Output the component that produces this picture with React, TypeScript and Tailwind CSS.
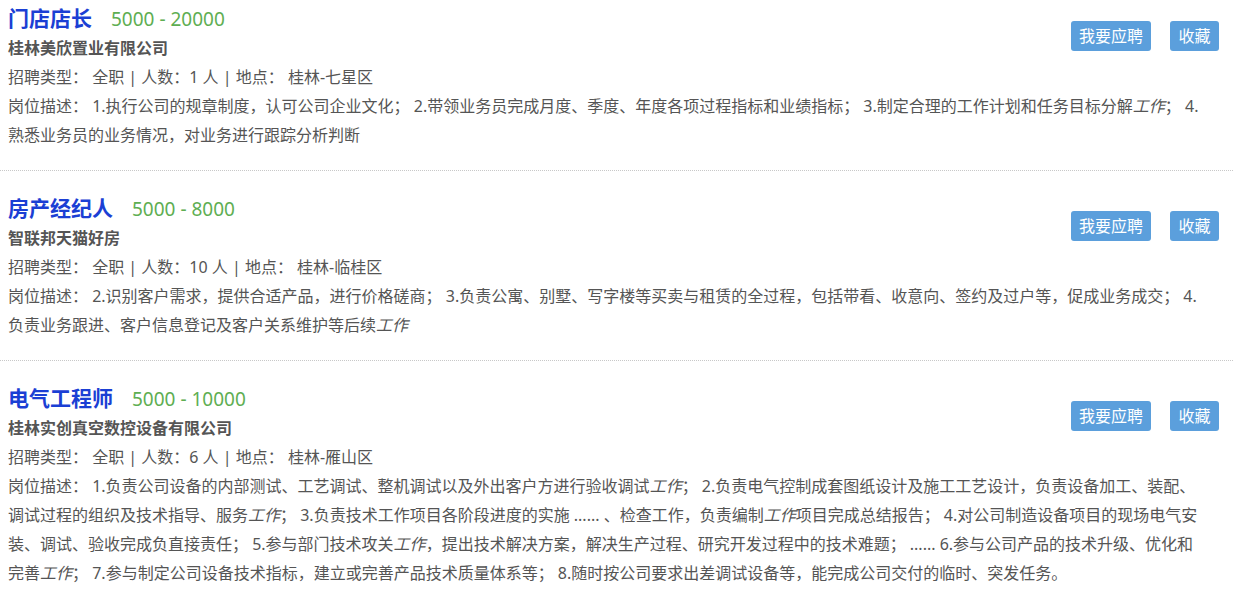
import React from 'react';

type Job = {
  title: string;
  salary: string;
  company: string;
  count: number;
  place: string;
  desc: React.ReactNode;
};

const W = () => <em className="italic">工作</em>;

const jobs: Job[] = [
  {
    title: '门店店长',
    salary: '5000 - 20000',
    company: '桂林美欣置业有限公司',
    count: 1,
    place: '桂林-七星区',
    desc: (
      <>
        1.执行公司的规章制度，认可公司企业文化； 2.带领业务员完成月度、季度、年度各项过程指标和业绩指标； 3.制定合理的工作计划和任务目标分解<W />； 4.熟悉业务员的业务情况，对业务进行跟踪分析判断
      </>
    ),
  },
  {
    title: '房产经纪人',
    salary: '5000 - 8000',
    company: '智联邦天猫好房',
    count: 10,
    place: '桂林-临桂区',
    desc: (
      <>
        2.识别客户需求，提供合适产品，进行价格磋商； 3.负责公寓、别墅、写字楼等买卖与租赁的全过程，包括带看、收意向、签约及过户等，促成业务成交； 4.负责业务跟进、客户信息登记及客户关系维护等后续<W />
      </>
    ),
  },
  {
    title: '电气工程师',
    salary: '5000 - 10000',
    company: '桂林实创真空数控设备有限公司',
    count: 6,
    place: '桂林-雁山区',
    desc: (
      <>
        1.负责公司设备的内部测试、工艺调试、整机调试以及外出客户方进行验收调试<W />； 2.负责电气控制成套图纸设计及施工工艺设计，负责设备加工、装配、调试过程的组织及技术指导、服务<W />； 3.负责技术工作项目各阶段进度的实施 ...... 、检查工作，负责编制<W />项目完成总结报告； 4.对公司制造设备项目的现场电气安装、调试、验收完成负直接责任； 5.参与部门技术攻关<W />，提出技术解决方案，解决生产过程、研究开发过程中的技术难题； ...... 6.参与公司产品的技术升级、优化和完善<W />； 7.参与制定公司设备技术指标，建立或完善产品技术质量体系等； 8.随时按公司要求出差调试设备等，能完成公司交付的临时、突发任务。
      </>
    ),
  },
];

function JobItem({ job, first }: { job: Job; first?: boolean }) {
  return (
    <div
      className={
        'border-b border-dotted border-[#c8c8c8] pl-[8px] pr-[14px] pb-[20px] ' +
        (first ? 'pt-[3px]' : 'pt-[22px]')
      }
    >
      <div className="flex justify-between">
        <div>
          <div className="flex items-baseline leading-[30px]">
            <span className="text-[21px] font-bold text-[#1b3fd4]">{job.title}</span>
            <span className="ml-[19px] text-[19px] text-[#5eae52]">{job.salary}</span>
          </div>
          <div className="text-[16px] font-bold leading-[29px] text-[#555]">{job.company}</div>
        </div>
        <div className="mt-[18px] flex h-[30px] gap-[19px]">
          <button className="h-[30px] w-[80px] rounded-[3px] bg-[#5b9fdc] text-[16px] text-white">我要应聘</button>
          <button className="h-[30px] w-[49px] rounded-[3px] bg-[#5b9fdc] text-[16px] text-white">收藏</button>
        </div>
      </div>
      <div className="pr-[11px] text-[16px] leading-[29px] text-[#555]">
        <div>招聘类型： 全职 | 人数：{job.count} 人 | 地点： {job.place}</div>
        <div>岗位描述： {job.desc}</div>
      </div>
    </div>
  );
}

export default function App() {
  return (
    <div
      className="h-[593px] w-[1240px] overflow-hidden bg-white"
      style={{ fontFamily: '"Noto Sans", "Noto Sans CJK SC", sans-serif' }}
    >
      <div className="w-[1233px]">
        {jobs.map((j, i) => (
          <JobItem key={j.title} job={j} first={i === 0} />
        ))}
      </div>
    </div>
  );
}
